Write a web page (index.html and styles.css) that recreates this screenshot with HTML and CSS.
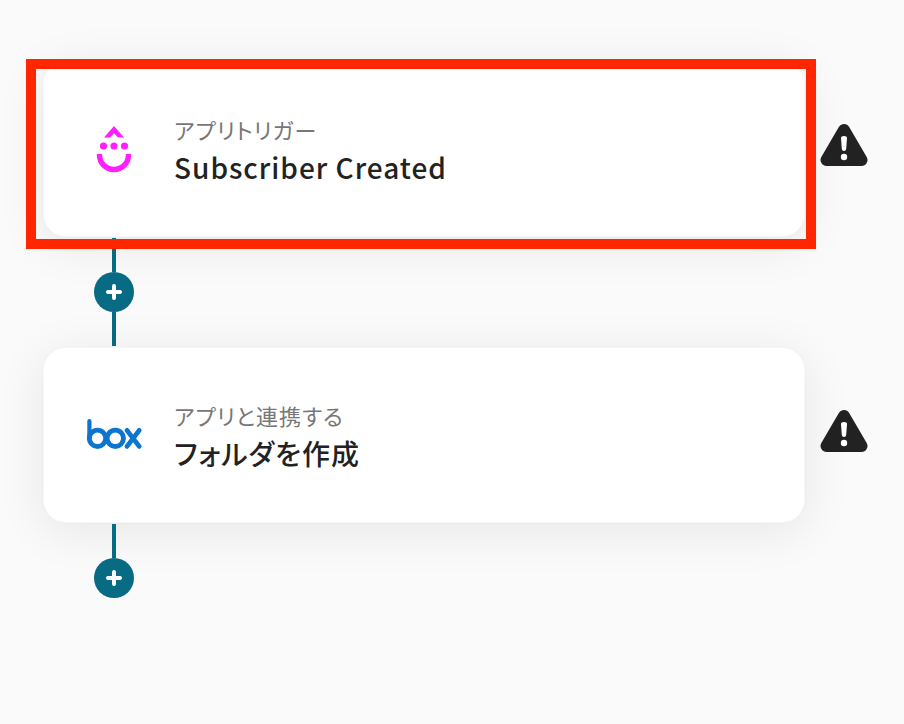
FILE: index.html
```html
<!DOCTYPE html>
<html lang="ja">
<head>
    <meta charset="UTF-8">
    <meta name="viewport" content="width=device-width, initial-scale=1.0">
    <title>Subscriber Created</title>
    <link rel="stylesheet" href="styles.css">
</head>
<body>
    <main class="flow">
        <div class="step">
            <div class="card selected">
                <svg class="app-icon" viewBox="0 0 60 60" aria-hidden="true">
                    <g fill="#ff1fff">
                        <path d="M30 7 L40 18.500 H34 L30 14.300 L26 18.500 H20 Z"/>
                        <circle cx="19.500" cy="27" r="3.600"/>
                        <circle cx="30" cy="27" r="3.600"/>
                        <circle cx="40.500" cy="27" r="3.600"/>
                    </g>
                    <path d="M15.500 35 V36 A14.500 14.500 0 0 0 44.500 36 V35" fill="none" stroke="#ff1fff" stroke-width="5.400"/>
                </svg>
                <div class="text">
                    <div class="label">アプリトリガー</div>
                    <div class="title">Subscriber Created</div>
                </div>
            </div>
            <svg class="warning" viewBox="0 0 48 56" role="img" aria-label="warning">
                <path d="M24 9 L41.500 39 H6.500 Z" fill="#222" stroke="#222" stroke-width="12" stroke-linejoin="round"/>
                <path d="M21 17 Q21 15 24 15 Q27 15 27 17 L26.200 28 Q26 30 24 30 Q22 30 21.800 28 Z" fill="#fff"/>
                <circle cx="24" cy="36" r="3.200" fill="#fff"/>
            </svg>
        </div>
        <div class="connector">
            <span class="line"></span>
            <button class="add" aria-label="add step">
                <svg viewBox="0 0 16 16"><path d="M8 2 V14 M2 8 H14"/></svg>
            </button>
            <span class="line"></span>
        </div>
        <div class="step">
            <div class="card">
                <svg class="app-icon" viewBox="0 0 60 60" aria-hidden="true">
                    <g fill="none" stroke="#0b75cf" stroke-width="4.800" stroke-linecap="round" stroke-linejoin="round">
                        <path d="M5.400 16.200 V33.300" stroke-width="4.200"/>
                        <circle cx="13.500" cy="33.300" r="8.200"/>
                        <circle cx="31.300" cy="33.300" r="8.200"/>
                        <path d="M43 25.400 L55.200 41.400 M55.200 25.400 L43 41.400"/>
                    </g>
                </svg>
                <div class="text">
                    <div class="label">アプリと連携する</div>
                    <div class="title">フォルダを作成</div>
                </div>
            </div>
            <svg class="warning" viewBox="0 0 48 56" role="img" aria-label="warning">
                <path d="M24 9 L41.500 39 H6.500 Z" fill="#222" stroke="#222" stroke-width="12" stroke-linejoin="round"/>
                <path d="M21 17 Q21 15 24 15 Q27 15 27 17 L26.200 28 Q26 30 24 30 Q22 30 21.800 28 Z" fill="#fff"/>
                <circle cx="24" cy="36" r="3.200" fill="#fff"/>
            </svg>
        </div>
        <div class="connector">
            <span class="line"></span>
            <button class="add" aria-label="add step">
                <svg viewBox="0 0 16 16"><path d="M8 2 V14 M2 8 H14"/></svg>
            </button>
        </div>
    </main>
</body>
</html>
```
FILE: styles.css
```css
*, *::before, *::after {
    box-sizing: border-box;
}
body {
    margin: 0;
    background: #fafafa;
    color: #222;
    font-family: 'Noto Sans CJK JP', sans-serif;
    font-feature-settings: 'palt';
    letter-spacing: 1px;
}
.flow {
    padding: 60px 36px 60px 42px;
}
.step {
    display: flex;
    align-items: center;
    gap: 14px;
}
.card {
    position: relative;
    flex: 1;
    display: flex;
    align-items: center;
    gap: 30px;
    padding: 49px 40px;
    background: white;
    background-clip: padding-box;
    border: 2px solid rgba(0, 0, 0, 0.01);
    border-radius: 24px;
    box-shadow: 0 8px 48px rgba(0, 0, 0, 0.08);
}
/* frame around the current step */
.card.selected::after {
    content: '';
    position: absolute;
    z-index: 1;
    inset: -3px -12px -13px -18px;
    border: 10px solid #ff2600;
}
.app-icon {
    flex: none;
    width: 60px;
    height: 60px;
}
.label {
    font-size: 22px;
    line-height: 36px;
    color: #777;
}
.title {
    font-size: 28px;
    font-weight: 500;
    line-height: 40px;
}
.warning {
    flex: none;
    width: 48px;
    height: 56px;
}
.connector {
    position: relative;
    display: flex;
    flex-direction: column;
    align-items: center;
    width: 40px;
    margin-left: 52px;
}
.line {
    width: 4px;
    height: 34px;
    background: #086b84;
}
.add {
    display: flex;
    align-items: center;
    justify-content: center;
    width: 40px;
    height: 40px;
    padding: 0;
    border: none;
    border-radius: 50%;
    background: #086b84;
    cursor: pointer;
}
.add svg {
    width: 16px;
    height: 16px;
    fill: none;
    stroke: white;
    stroke-width: 4;
    stroke-linecap: round;
}
```
